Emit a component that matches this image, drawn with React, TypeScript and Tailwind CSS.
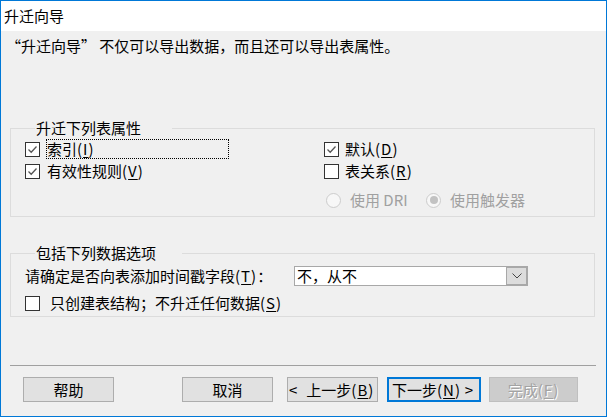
import React from "react";

function CheckBox({ checked }: { checked?: boolean }) {
  return (
    <span className="flex h-[15px] w-[15px] shrink-0 items-center justify-center border border-[#333333] bg-white">
      {checked && (
        <svg width="13" height="13" viewBox="0 0 13 13">
          <polyline points="2.5,6.5 5.2,9.2 10.5,3.5" fill="none" stroke="#555555" strokeWidth="1.3" />
        </svg>
      )}
    </span>
  );
}

function Radio({ selected }: { selected?: boolean }) {
  return (
    <span className="flex h-[15px] w-[15px] shrink-0 items-center justify-center rounded-full border border-[#cccccc] bg-[#f7f7f7]">
      {selected && <span className="h-[8px] w-[8px] rounded-full bg-[#c2c2c2]" />}
    </span>
  );
}

function Key({ k }: { k: string }) {
  return (
    <span className="tracking-[1px]">
      (<span className="underline underline-offset-[2px]">{k}</span>)
    </span>
  );
}

export default function App() {
  return (
    <div className="flex h-[417px] w-[607px] flex-col overflow-hidden border border-[#0078d7] bg-[#f0f0f0] font-['Noto_Sans_CJK_SC',sans-serif] text-[15px] leading-[20px] text-black">
      {/* title bar */}
      <div className="flex h-[30px] shrink-0 items-center bg-white pl-[3px]">升迁向导</div>

      <p className="mt-[5px] pl-[5px]">“升迁向导” 不仅可以导出数据，而且还可以导出表属性。</p>

      {/* table attributes */}
      <fieldset className="ml-[9px] mt-[63px] w-[585px] border border-[#dcdcdc] pb-[6px] pl-[14px] pt-[2px]">
        <legend className="ml-[10px] w-[137px] pl-[1px] leading-[18px]">升迁下列表属性</legend>
        <div className="grid grid-cols-[299px_1fr]">
          <div className="flex flex-col gap-[2px]">
            <label className="flex h-[20px] items-center gap-[6px]">
              <CheckBox checked />
              <span className="h-[20px] w-[183px] border border-dotted border-black leading-[18px]">
                索引<Key k="I" />
              </span>
            </label>
            <label className="flex h-[20px] items-center gap-[7px]">
              <CheckBox checked />
              <span>
                有效性规则<Key k="V" />
              </span>
            </label>
          </div>
          <div className="flex flex-col gap-[2px]">
            <label className="flex h-[20px] items-center gap-[6px]">
              <CheckBox checked />
              <span>
                默认<Key k="D" />
              </span>
            </label>
            <label className="flex h-[20px] items-center gap-[6px]">
              <CheckBox />
              <span>
                表关系<Key k="R" />
              </span>
            </label>
            <div className="mt-[7px] flex h-[20px] items-center pl-[2px] text-[#a0a0a0]">
              <Radio />
              <span className="ml-[9px] w-[76px]">使用 DRI</span>
              <Radio selected />
              <span className="ml-[9px]">使用触发器</span>
            </div>
          </div>
        </div>
      </fieldset>

      {/* data options */}
      <fieldset className="ml-[9px] mt-[27px] w-[585px] border border-[#dcdcdc] pb-[3px] pl-[14px] pt-[4px]">
        <legend className="ml-[10px] w-[147px] pl-[1px] leading-[18px]">包括下列数据选项</legend>
        <div className="flex h-[20px] items-center">
          <span className="w-[269px]">
            请确定是否向表添加时间戳字段<Key k="T" />：
          </span>
          <div className="flex h-[20px] w-[234px] border border-[#a8a8a8] bg-white">
            <span className="flex-1 pl-[2px] leading-[18px]">不，从不</span>
            <span className="flex w-[21px] items-center justify-center border border-[#a8a8a8] bg-[#dcdcdc]">
              <svg width="10" height="6" viewBox="0 0 10 6">
                <polyline points="0.5,0.5 5,5 9.5,0.5" fill="none" stroke="#444444" strokeWidth="1" />
              </svg>
            </span>
          </div>
        </div>
        <label className="mt-[7px] flex h-[20px] items-center gap-[10px]">
          <CheckBox />
          <span>
            只创建表结构；不升迁任何数据<Key k="S" />
          </span>
        </label>
      </fieldset>

      <div className="ml-[9px] mt-[48px] h-px w-[586px] bg-[#a0a0a0]" />

      {/* buttons */}
      <div className="mt-[11px] flex h-[25px]">
        <button className="ml-[22px] w-[91px] border border-[#adadad] bg-[#e1e1e1]">帮助</button>
        <button className="ml-[68px] w-[91px] border border-[#adadad] bg-[#e1e1e1]">取消</button>
        <button className="ml-[14px] flex w-[91px] items-center border border-[#adadad] bg-[#e1e1e1] pl-[1px]">
          <span>&lt;</span>
          <span className="ml-[9px]">
            上一步<Key k="B" />
          </span>
        </button>
        <button className="ml-[9px] flex w-[94px] items-center border-2 border-[#0078d7] bg-[#e1e1e1] pl-[3px] pr-[6px]">
          <span>
            下一步<Key k="N" />
          </span>
          <span className="ml-auto">&gt;</span>
        </button>
        <button className="ml-[8px] w-[89px] border border-[#bfbfbf] bg-[#cccccc] text-[#a3a3a3] [text-shadow:1px_1px_0_#ffffff]">
          完成<Key k="F" />
        </button>
      </div>
    </div>
  );
}
